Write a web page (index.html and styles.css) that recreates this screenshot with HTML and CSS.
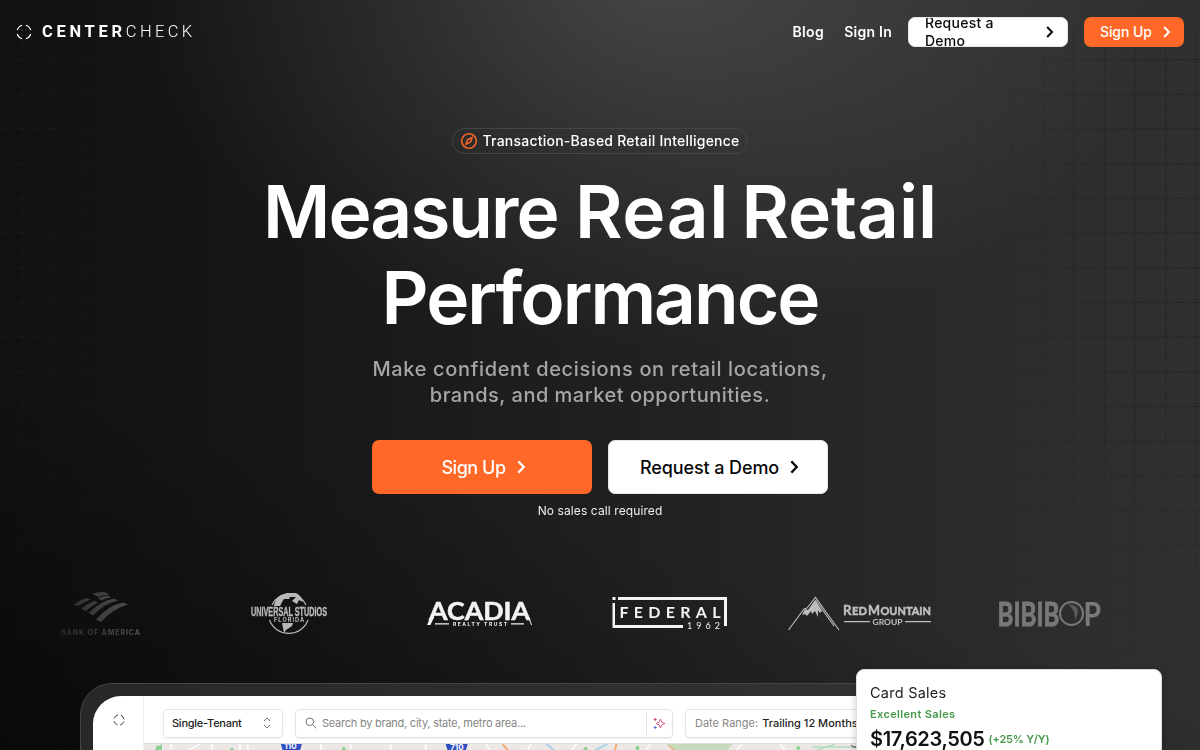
FILE: index.html
```html
<!DOCTYPE html>
<html lang="en">
<head>
<meta charset="utf-8">
<title>CenterCheck</title>
<link rel="stylesheet" href="styles.css">
</head>
<body>
<div class="page">
  <svg class="grid-bg" width="1200" height="750" aria-hidden="true">
    <defs>
      <pattern id="cellsLeft" x="22.5" y="25" width="31" height="34.7" patternUnits="userSpaceOnUse">
        <path d="M0 34.2H31" stroke-dasharray="2 3"/>
        <path d="M30.5 0V34.7" stroke-dasharray="2 3"/>
      </pattern>
      <pattern id="cellsRight" x="3.4" y="25.3" width="30.6" height="34.7" patternUnits="userSpaceOnUse">
        <path d="M0 34.2H30.6" stroke-dasharray="3 2"/>
        <path d="M30 0V34.7" stroke-dasharray="3 2"/>
      </pattern>
      <linearGradient id="leftFade"><stop offset="0" stop-color="#fff"/><stop offset="1" stop-color="#fff" stop-opacity="0"/></linearGradient>
      <linearGradient id="rightFade"><stop offset="0" stop-color="#fff" stop-opacity="0"/><stop offset="1" stop-color="#fff"/></linearGradient>
      <linearGradient id="bottomFade" x2="0" y2="1"><stop offset=".5" stop-color="#fff"/><stop offset="1" stop-color="#fff" stop-opacity="0"/></linearGradient>
      <mask id="leftMask"><rect y="30" width="190" height="620" fill="url(#leftFade)"/></mask>
      <mask id="rightMask"><rect x="960" y="30" width="240" height="690" fill="url(#rightFade)"/></mask>
      <mask id="lowMask"><rect width="1200" height="700" fill="url(#bottomFade)"/></mask>
    </defs>
    <g mask="url(#lowMask)">
      <g class="grid-left" mask="url(#leftMask)"><rect width="200" height="750" fill="url(#cellsLeft)"/></g>
      <g class="grid-right" mask="url(#rightMask)"><rect x="950" width="250" height="750" fill="url(#cellsRight)"/></g>
    </g>
  </svg>

  <header class="nav">
    <div class="brand">
      <svg width="16" height="16" viewBox="0 0 16 16" class="ring"><circle cx="8" cy="8" r="7" pathLength="80" stroke-dasharray="13 7" stroke-dashoffset="-3.5"/></svg>
      <span class="wordmark"><b>CENTER</b><span>CHECK</span></span>
    </div>
    <nav class="links">
      <a class="link">Blog</a>
      <a class="link sign-in">Sign In</a>
      <a class="btn small light"><span>Request a Demo</span><svg width="8" height="12" viewBox="0 0 8 12"><path d="M1.2 1 6 6 1.2 11"/></svg></a>
      <a class="btn small orange"><span>Sign Up</span><svg width="8" height="12" viewBox="0 0 8 12"><path d="M1.2 1 6 6 1.2 11"/></svg></a>
    </nav>
  </header>

  <main class="hero">
    <div class="pill">
      <svg width="18" height="18" viewBox="0 0 18 18"><circle cx="9" cy="9" r="7.3"/><path d="M12.1 5.6 10.6 10 6 12.3 7.4 7.8Z"/></svg>
      <span>Transaction-Based Retail Intelligence</span>
    </div>
    <h1 class="title"><span class="tight">Measure</span> <span class="wide">Real</span> <span class="even">Retail</span><br><span class="tight">Performance</span></h1>
    <p class="lead">Make confident decisions on retail locations,<br><span>brands, and market opportunities.</span></p>
    <div class="cta">
      <a class="btn big orange"><span>Sign Up</span><svg width="9" height="14" viewBox="0 0 8 12"><path d="M1.2 1 6 6 1.2 11"/></svg></a>
      <a class="btn big light"><span>Request a Demo</span><svg width="9" height="14" viewBox="0 0 8 12"><path d="M1.2 1 6 6 1.2 11"/></svg></a>
    </div>
    <p class="note">No sales call required</p>
  </main>

  <section class="logos">
    <svg class="logo-row" width="1200" height="70" viewBox="0 580 1200 70">
      <defs><linearGradient id="edgeFade" gradientUnits="userSpaceOnUse" x1="56" x2="140" y1="0" y2="0"><stop offset="0" stop-color="#fff" stop-opacity=".4"/><stop offset="1" stop-color="#fff"/></linearGradient></defs>
      <g opacity=".28" fill="url(#edgeFade)">
        <path d="M73.5 605Q81 599 87 598L90.500 599.500Q83 603 78 606ZM81 609Q89 602 95 601L98 602.500Q91 606 86 611ZM92 593.500Q100 591.500 104 592L110 594.500Q104 594.500 98 597ZM97.500 598.500Q104 595.500 108 595.500L111 597.500Q106 598 102 600.500ZM88.500 613Q101 600.500 114 598.500L118 600.500Q105 603 93 615.500ZM96 619.500Q109 605 123 602.500L128 604.500Q113 608.500 101 622Z"/>
        <text x="61" y="635" font-size="7" font-weight="700" textLength="79">BANK OF AMERICA</text>
      </g>
      <g opacity=".7">
        <path d="M274 606A16 15 0 0 1 281 595L287 593H296Q302 596 303 602L299 600 297 604 292 601 296 597 290 597 289 599 284 599 282 602 280 606Z"/>
        <path class="line" stroke-width="1.2" d="M272 605A18.500 18 0 0 1 306 605M269.500 620A20.500 20.500 0 0 0 308 620"/>
        <path d="M282 623H293L292 626 286 630 284 633Z"/>
        <text x="251" y="615.500" class="narrow" font-size="12" font-weight="700" textLength="76" lengthAdjust="spacingAndGlyphs" stroke="#fff" stroke-width=".3">UNIVERSAL STUDIOS</text>
        <text x="274" y="621.500" font-size="5.500" font-weight="700" textLength="30">FLORIDA</text>
      </g>
      <g opacity=".95">
        <text x="429" y="619.500" class="geo" font-size="24.500" font-weight="700" stroke="#fff" stroke-width=".5" textLength="101" lengthAdjust="spacingAndGlyphs">ACADIA</text>
        <path d="M430.500 617 427 625H430.500L434 617ZM528 617 531 625H532L529 617ZM435 623.200H449V624.400H435ZM511 623.200H524V624.400H511Z"/>
        <text x="453" y="625.700" font-size="5" font-weight="700" textLength="54">REALTY TRUST</text>
      </g>
      <g opacity=".95">
        <path d="M612.500 597H615.500V600H612.500ZM618 597H727V626H724V600H618ZM612.500 603H615V625H683V628H612.500Z"/>
        <text x="619.500" y="617.500" class="geo" font-size="16" font-weight="700" textLength="101">FEDERAL</text>
        <text x="687" y="629" class="geo" font-size="9" textLength="33">1962</text>
      </g>
      <g opacity=".7">
        <path d="M815 600 822 611 820 613 818 610 818 617 815 611 812 614 811 611 807 616 805 614 802 615 805 609 808 610Z"/>
        <path class="line" stroke-width="1.1" d="M788.500 630 804 609 807 608 815.500 597.500 839 630M815.500 600 834 626"/>
        <text x="843" y="615" class="geo" font-size="14" font-weight="700" stroke="#fff" stroke-width=".4" textLength="8.500" lengthAdjust="spacingAndGlyphs">R</text>
        <text x="852" y="615" class="geo" font-size="12" font-weight="700" stroke="#fff" stroke-width=".5" textLength="15" lengthAdjust="spacingAndGlyphs">ED</text>
        <text x="868" y="615" class="geo" font-size="14" font-weight="700" stroke="#fff" stroke-width=".4" textLength="12" lengthAdjust="spacingAndGlyphs">M</text>
        <text x="880.500" y="615" class="geo" font-size="12" font-weight="700" stroke="#fff" stroke-width=".5" textLength="50.500" lengthAdjust="spacingAndGlyphs">OUNTAIN</text>
        <text x="872.500" y="624.700" class="geo" font-size="8.300" font-weight="700" textLength="30" lengthAdjust="spacingAndGlyphs">GROUP</text>
        <path d="M844 621H870V622.300H844ZM905 621H931V622.300H905Z"/>
      </g>
      <g opacity=".36">
        <text x="997.500" y="625.500" class="geo" font-size="33" font-weight="700" stroke="#fff" stroke-width=".8" textLength="62" lengthAdjust="spacingAndGlyphs">BIBIB</text>
        <circle class="line" cx="1071.500" cy="613.500" r="11.500" stroke-width="2"/>
        <path opacity=".6" d="M1068 604Q1079 605 1078 613L1075 621Q1076 611 1068 604Z"/>
        <text x="1083.500" y="625.500" class="geo" font-size="33" font-weight="700" textLength="17.500" lengthAdjust="spacingAndGlyphs">P</text>
      </g>
    </svg>
  </section>

  <section class="product">
    <div class="screen">
      <aside class="side"><svg width="12" height="12" viewBox="0 0 16 16" class="ring"><circle cx="8" cy="8" r="6.800" pathLength="80" stroke-dasharray="13 7" stroke-dashoffset="-3.5"/></svg></aside>
      <div class="workspace">
        <div class="toolbar">
          <div class="field tenant"><span>Single-Tenant</span><svg width="8" height="12" viewBox="0 0 8 12"><path d="M1 4 4 1 7 4M1 8l3 3 3-3"/></svg></div>
          <div class="field search">
            <svg width="12" height="12" viewBox="0 0 12 12"><circle cx="4.800" cy="4.800" r="3.800"/><path d="m7.600 7.600 3.700 3.700"/></svg>
            <span>Search by brand, city, state, metro area...</span>
            <div class="ai"><svg width="13" height="13" viewBox="0 0 13 13"><path stroke="#db5d7c" d="m7.500 2 1.200 3.100 3.300 1.400-3.300 1.400-1.200 3.100-1.300-3.100-3.100-1.400 3.100-1.400Z"/><path stroke="#db4565" d="M2.200 1v3M.7 2.500h3"/><path stroke="#5269d7" d="M2.200 9v3M.7 10.500h3"/></svg></div>
          </div>
          <div class="field date"><span>Date Range:</span><b>Trailing 12 Months</b></div>
        </div>
        <svg class="map" width="964" height="20" viewBox="143 744 964 20">
          <g fill="none" stroke="#fff" stroke-width="1.400"><path d="M170 744V764M178 755 199 744M211 744V764M239 744V764M247 744V764M320 744V764M350 744V764M390 744V764M425 744V764M485 744 500 764M530 744 520 764M576 744 560 764M650 744 635 764M741 744 725 764M780 744 795 764"/></g>
          <g fill="none" stroke="#f4ad74" stroke-width="2"><path d="M502 744 512 756M616 744 612 758M667 744 680 756"/></g>
          <g fill="none" stroke="#a9d4ea" stroke-width="2"><path d="M546 744 560 756M595 750 607 744M690 756 705 744"/></g>
          <path d="M666 744H732L724 754H680Z" fill="#c8d9bc"/>
          <g fill="#8ad293"><path d="m154 750 2-5 2 1 3-2v6Z"/><circle cx="231" cy="750" r="2"/><circle cx="343" cy="749" r="2"/><circle cx="585" cy="749" r="2"/><circle cx="637" cy="748" r="2"/><circle cx="798" cy="748" r="2"/></g>
          <path d="M812 747H855M808 753 835 744" stroke="#9bd8b2" fill="none"/>
          <g fill="#2f4fc0"><path d="M280 744H301Q299 756 290 757 282 755 280 744ZM445 744H467Q465 756 456 757 447 755 445 744Z"/></g>
          <g fill="#fff" font-size="8" font-weight="700"><text x="283.500" y="748.500">110</text><text x="449.500" y="750">710</text></g>
          <path d="m851 745 2 2h3" stroke="#333" fill="none"/>
        </svg>
      </div>
    </div>
    <div class="sales">
      <div class="sales-title">Card Sales</div>
      <div class="sales-tag">Excellent Sales</div>
      <div class="sales-row"><strong>$17,623,505</strong><span>(+25% Y/Y)</span></div>
    </div>
  </section>
</div>
</body>
</html>
```

FILE: styles.css
```css
* { box-sizing: border-box; }
body { margin: 0; background: #1b1b1b; font-family: Inter, "Liberation Sans", sans-serif; color: #fff; }
.page {
  position: relative; height: 750px; overflow: hidden; display: flex; flex-direction: column;
  background:
    radial-gradient(ellipse 520px 380px at 650px -30px, rgba(255,255,255,.17), rgba(255,255,255,.08) 50%, transparent),
    linear-gradient(15deg, rgba(0,0,0,.45), transparent 35%),
    linear-gradient(90deg, #111 0, #161616 20%, #202020 52%, #2b2b2b 82%, #303030);
}
.grid-bg { position: absolute; inset: 0; pointer-events: none; }
.grid-bg pattern path { fill: none; stroke: #1b1b1b; stroke-width: 1; }
.grid-bg #cellsLeft path { stroke: #252525; }
.grid-left { opacity: .8; }
.grid-right { opacity: .8; }

.nav { position: relative; height: 64px; flex: none; padding: 0 16px; display: flex; align-items: center; justify-content: space-between; }
.brand { display: flex; align-items: center; gap: 10px; }
.ring { fill: none; stroke: currentColor; stroke-width: 1.15; }
.wordmark { font-family: Roboto, sans-serif; font-size: 16.5px; line-height: 20px; letter-spacing: 3.7px; padding-bottom: 1px; }
.wordmark span { font-weight: 300; letter-spacing: 3.4px; }
.links { display: flex; align-items: center; font-size: 14px; font-weight: 600; letter-spacing: .25px; }
.link { margin-right: 20px; padding-bottom: 1px; letter-spacing: .4px; }
.link.sign-in { margin-right: 16px; letter-spacing: .25px; }
.btn { display: flex; align-items: center; font-weight: 500; }
.btn svg { fill: none; stroke: currentColor; stroke-width: 2; flex: none; }
.btn.orange { background: #ff6826; color: #fff; }
.btn.light { background: #fff; color: #080808; border: 1px solid #e7e7e7; }
.btn.small { height: 30px; border-radius: 7px; padding: 0 13px 0 16px; line-height: 18px; letter-spacing: .25px; justify-content: space-between; }
.btn.small.light { width: 160px; overflow: hidden; margin-right: 16px; }
.btn.small.light span { width: 90px; }
.btn.small.orange { width: 100px; letter-spacing: -.1px; }

.hero { position: relative; height: 516px; flex: none; padding-top: 64px; display: flex; flex-direction: column; align-items: center; text-align: center; }
.pill { width: 296px; height: 26px; border: 1px solid #454545; border-radius: 13px; display: flex; align-items: center; justify-content: center; gap: 4px; font-size: 14px; font-weight: 500; letter-spacing: .23px; white-space: nowrap; }
.pill svg { fill: none; stroke: #f0642b; stroke-width: 1.6; flex: none; }
.pill span { padding-bottom: 1px; }
.title { margin: 15px 0 0; font-size: 73px; font-weight: 600; line-height: 85.5px; letter-spacing: -1px; white-space: nowrap; }
.title .tight { letter-spacing: -2px; }
.title .wide { letter-spacing: .6px; }
.title .even { letter-spacing: -.1px; margin-left: -5px; }
.lead { margin: 16px 0 0; font-size: 20px; font-weight: 500; line-height: 26px; letter-spacing: .65px; color: #a6a6a6; white-space: nowrap; }
.lead span { letter-spacing: .5px; }
.cta { display: flex; gap: 16px; margin-top: 32px; }
.btn.big { width: 220px; height: 54px; border-radius: 7px; justify-content: center; gap: 11px; padding-left: 3px; font-size: 18px; letter-spacing: -.1px; white-space: nowrap; }
.btn.big.orange { letter-spacing: -.45px; }
.note { margin: 9px 0 0; font-size: 12px; line-height: 16px; color: #eee; letter-spacing: .1px; }

.logos { position: relative; height: 70px; flex: none; }
.logo-row { display: block; fill: #fff; }
.logo-row .line { fill: none; stroke: #fff; }
.logo-row .geo { font-family: Lato, sans-serif; }
.logo-row .narrow { font-family: "Liberation Sans", sans-serif; }

.product { position: relative; width: 1040px; height: 500px; flex: none; margin: 33px auto 0; padding: 12px; border: 1px solid #454545; border-radius: 32px; background: linear-gradient(90deg, #282828, #353535); }
.screen { height: 474px; display: flex; overflow: hidden; background: #fff; border-radius: 28px; color: #222; }
.side { width: 51px; flex: none; padding: 18px 0 0 20px; border-right: 1px solid #eee; line-height: 0; }
.workspace { flex: 1; min-width: 0; }
.toolbar { height: 48px; padding: 13px 0 0 19px; display: flex; gap: 12px; border-bottom: 1px solid #ddd; }
.field { height: 29px; border: 1px solid #e4e4e4; border-radius: 4px; display: flex; align-items: center; padding-bottom: 1px; font-size: 11px; white-space: nowrap; box-shadow: 0 1px 2px #0001; flex: none; }
.field svg { fill: none; stroke: #777; }
.tenant { width: 120px; justify-content: space-between; padding: 0 11px 1px 8px; font-weight: 500; letter-spacing: -.25px; }
.search { width: 378px; padding-left: 9px; gap: 5px; color: #858585; letter-spacing: -.24px; }
.ai { margin-left: auto; width: 26px; height: 23px; border-left: 1px solid #e4e4e4; display: flex; align-items: center; justify-content: center; }
.date { width: 210px; padding-left: 9px; gap: 4px; color: #888; }
.date b { color: #222; font-weight: 500; }
.map { display: block; width: 100%; height: 20px; background: #ebe8e5; }
.sales { position: absolute; left: 775px; top: -15px; width: 306px; height: 180px; padding: 14px 13px; background: #fff; color: #222; border: 1px solid #ddd; border-radius: 8px; box-shadow: 0 2px 8px #0003; }
.sales-title { font-size: 14.5px; line-height: 18px; letter-spacing: .25px; }
.sales-tag { color: #45994a; font-size: 11px; font-weight: 600; line-height: 16px; margin-top: 4px; letter-spacing: .35px; }
.sales-row { display: flex; align-items: center; gap: 4px; margin-top: 4px; }
.sales-row strong { font-size: 20px; line-height: 26px; font-weight: 600; color: #111; letter-spacing: -.35px; }
.sales-row span { font-size: 11px; color: #45994a; font-weight: 600; letter-spacing: -.2px; }
```
